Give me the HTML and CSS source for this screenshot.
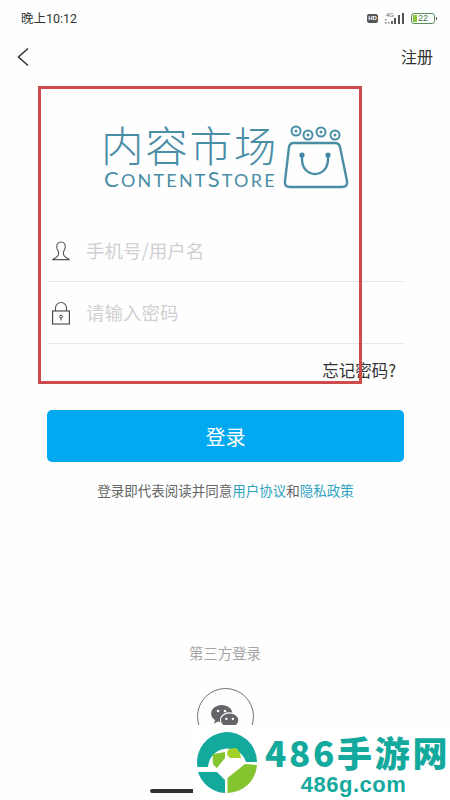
FILE: index.html
```html
<!DOCTYPE html>
<html lang="zh-CN">
<head>
  <meta charset="UTF-8">
  <meta name="viewport" content="width=device-width, initial-scale=1.0">
  <title>内容市场</title>
  <link rel="stylesheet" href="styles.css">
</head>
<body>
  <div class="page">
    <div class="status-bar">
      <span class="time">晚上10:12</span>
      <div class="status-icons">
        <span class="hd">HD</span>
        <svg class="signal" width="21" height="14" viewBox="0 0 21 14">
          <text x="2" y="6" class="net">4G</text>
          <rect x="1" y="8" width="1.500" height="1.500" fill="#888"/>
          <rect x="1" y="11" width="1.500" height="1.500" fill="#888"/>
          <rect x="4" y="11" width="1.500" height="1.500" fill="#888"/>
          <rect x="7" y="10" width="2" height="3" fill="#666"/>
          <rect x="10" y="7" width="2" height="6" fill="#555"/>
          <rect x="14" y="4" width="2" height="9" fill="#555"/>
          <rect x="18" y="2" width="2" height="11" fill="#555"/>
        </svg>
        <span class="battery"><span class="battery-fill"></span><span class="battery-num">22</span></span>
      </div>
    </div>

    <div class="nav">
      <svg width="12" height="20" viewBox="0 0 12 20"><path d="M11 1.500 1.500 10 11 18.500" fill="none" stroke="#333" stroke-width="1.500"/></svg>
      <span class="nav-link">注册</span>
    </div>

    <div class="logo">
      <div class="logo-words">
        <div class="logo-cn">内容市场</div>
        <div class="logo-en"><span class="cap">C</span>ONTENT<span class="cap">S</span>TORE</div>
      </div>
      <svg class="bag" width="66" height="64" viewBox="0 0 66 64">
        <g fill="none" stroke="#4a8ea6" stroke-width="2">
          <circle cx="13" cy="6" r="4.500"/>
          <circle cx="25" cy="10" r="4.500"/>
          <circle cx="38" cy="7" r="4.500"/>
          <circle cx="52" cy="10" r="4.500"/>
          <path d="M10 18H52Q56 18 57 22L64 56Q65 62 59 62H7Q1 62 2 56L6 22Q7 18 10 18Z" stroke-width="2.400"/>
          <path d="M19 30V34C19 54 45 54 45 34V30" stroke-width="2.400"/>
        </g>
        <circle cx="19" cy="30" r="2.600" fill="#3f87a3"/>
        <circle cx="45" cy="30" r="2.600" fill="#3f87a3"/>
        <g fill="#4a8ea6">
          <circle cx="13" cy="6" r="1.500"/>
          <circle cx="25" cy="10" r="1.500"/>
          <circle cx="38" cy="7" r="1.500"/>
          <circle cx="52" cy="10" r="1.500"/>
        </g>
      </svg>
    </div>

    <div class="form">
      <div class="field">
        <svg class="field-icon" width="18" height="20" viewBox="0 0 18 20">
          <path d="M9 1C5.800 1 4.600 3.400 4.800 6.200 5 8.600 6.400 10 6.600 11.400 6.800 13.600 6.600 15 4.400 16.200 3 17 1.600 17.600.8 18.600H17.200C16.400 17.600 15 17 13.600 16.200 11.400 15 11.200 13.600 11.400 11.400 11.600 10 13 8.600 13.200 6.200 13.400 3.400 12.200 1 9 1Z" fill="none" stroke="#555" stroke-width="1.100"/>
        </svg>
        <span class="placeholder">手机号/用户名</span>
      </div>
      <div class="field">
        <svg class="field-icon" width="18" height="24" viewBox="0 0 18 24">
          <path d="M3.500 10V7A5.500 5.500 0 0 1 14.500 7V10" fill="none" stroke="#555" stroke-width="1.100"/>
          <rect x=".6" y="10" width="16.800" height="13" fill="none" stroke="#444" stroke-width="1.100"/>
          <circle cx="9" cy="15.500" r="1.400" fill="none" stroke="#444"/>
          <path d="M9 17V19.500" stroke="#444"/>
        </svg>
        <span class="placeholder">请输入密码</span>
      </div>
      <div class="forgot">忘记密码?</div>
      <button class="login-btn">登录</button>
      <p class="terms">登录即代表阅读并同意<span class="terms-link">用户协议</span>和<span class="terms-link">隐私政策</span></p>
    </div>

    <div class="third">
      <div class="third-title">第三方登录</div>
      <div class="wechat">
        <svg width="28" height="24" viewBox="0 0 30 26">
          <path d="M11.500 0C5.200 0 0 4.100 0 9.300 0 12.200 1.600 14.700 4.200 16.400L3 20 7.200 17.800C8.500 18.300 10 18.500 11.500 18.500 17.800 18.500 23 14.400 23 9.300 23 4.100 17.800 0 11.500 0Z" fill="#666468"/>
          <path d="M20 8.500C14.500 8.500 10 12 10 16.500 10 21 14.500 24.500 20 24.500 21.200 24.500 22.300 24.300 23.400 24L27 26 26.100 22.800C28.500 21.200 30 19 30 16.500 30 12 25.500 8.500 20 8.500Z" fill="#666468" stroke="#fff" stroke-width="1.200"/>
          <g fill="#fff">
            <circle cx="7.500" cy="6.500" r="1.400"/>
            <circle cx="15" cy="6.500" r="1.400"/>
            <circle cx="16.500" cy="15" r="1.300"/>
            <circle cx="23.500" cy="15" r="1.300"/>
          </g>
        </svg>
      </div>
    </div>

    <div class="home-bar"></div>

    <div class="red-box"></div>

    <div class="watermark">
      <svg class="wm-logo" width="62" height="64" viewBox="0 0 62 64">
        <path d="M1.400 36A30 30 0 1 1 61 31H50A19.500 19.500 0 0 0 12 36Z" fill="#14a99d"/>
        <path d="M61 34A30 30 0 0 1 31.500 62V47L49 33Z" fill="#84c52f"/>
        <path d="M2 41H21L29 49V62A30 30 0 0 1 2 41Z" fill="#14a99d"/>
        <path d="M17 23 29 21V27L21 37 17.500 34C16.500 31 16.500 27 17 23Z" fill="#84c52f"/>
        <path d="M31.500 20 33 18 40 17C43 19 44.500 23 45 27L34 27 31 24Z" fill="#a2d128"/>
      </svg>
      <div class="wm-text">
        <div class="wm-title">486手游网</div>
        <div class="wm-url">486g.com</div>
      </div>
    </div>
  </div>
</body>
</html>
```

FILE: styles.css
```css
* { box-sizing: border-box; margin: 0; padding: 0; }
body { width: 450px; height: 800px; overflow: hidden; background: #fefefe; font-family: "Noto Sans CJK SC", "Liberation Sans", sans-serif; }
.page { position: relative; width: 450px; height: 800px; overflow: hidden; padding-top: 8px; }

.status-bar { display: flex; justify-content: space-between; align-items: center; height: 20px; padding: 0 15px 0 21px; }
.time { margin-bottom: 2px; font-size: 12.500px; color: #333; font-family: "Roboto", "Noto Sans CJK SC", sans-serif; }
.status-icons { display: flex; align-items: center; gap: 6px; }
.hd { width: 11px; height: 9px; background: #555; border-radius: 2px; color: #fff; font-size: 6px; line-height: 9px; text-align: center; font-family: "Liberation Sans", sans-serif; font-weight: bold; }
.net { font-size: 6px; fill: #666; font-family: "Liberation Sans", sans-serif; }
.signal { display: block; }
.battery { position: relative; display: block; width: 24px; height: 11px; border: 1px solid #5a8f5a; border-radius: 3px; }
.battery::after { content: ""; position: absolute; right: -3px; top: 3px; width: 1.500px; height: 3px; background: #555; }
.battery-fill { display: block; width: 4px; height: 7px; margin: 1px; background: #8cc63f; }
.battery-num { position: absolute; left: 6px; top: -1px; font-size: 9px; line-height: 11px; color: #4a7c4a; font-family: "Liberation Sans", sans-serif; }

.nav { display: flex; justify-content: space-between; align-items: center; height: 38px; margin-top: 10px; padding: 0 17px; }
.nav svg { display: block; }
.nav-link { margin-bottom: 2px; font-size: 16px; color: #333; }

.logo { display: flex; align-items: flex-start; gap: 5px; height: 64px; margin: 49px 0 0 103px; }
.logo-words { width: 175px; }
.logo-cn { margin: -2px 0 0 -2px; font-size: 42.500px; font-weight: 300; line-height: 42px; letter-spacing: 1.800px; color: #4a8ea6; white-space: nowrap; }
.logo-en { margin-top: 4px; padding-left: 1px; font-family: "Lato", sans-serif; font-size: 18px; line-height: 20px; color: #4a8ea6; white-space: nowrap; letter-spacing: 2.200px; }
.cap { font-size: 22px; }
.bag { display: block; flex: none; }

.form { margin: 31px 46px 0 47px; }
.field { display: flex; align-items: center; height: 62px; padding-left: 5px; border-bottom: 1px solid #e8e6ec; }
.field-icon { display: block; flex: none; width: 18px; margin-right: 16px; }
.placeholder { margin-bottom: 2px; font-size: 18.500px; color: #d0d0d3; white-space: nowrap; }
.forgot { margin-top: 14px; padding-right: 8px; text-align: right; font-size: 16.500px; line-height: 24px; color: #333; }
.login-btn { display: block; width: 100%; height: 52px; margin-top: 28px; border: 0; border-radius: 5px; background: #03a9f0; color: #fff; font-family: inherit; font-size: 20px; }
.terms { margin-top: 18px; text-align: center; font-size: 13.500px; line-height: 20px; color: #666; white-space: nowrap; }
.terms-link { color: #2fa3bd; }

.third { display: flex; flex-direction: column; align-items: center; margin-top: 143px; }
.third-title { font-size: 14.400px; line-height: 20px; color: #a5a5a5; }
.wechat { display: flex; justify-content: center; padding-top: 16px; width: 57px; height: 57px; margin-top: 25px; border: 1.500px solid #747474; border-radius: 50%; }
.wechat svg { display: block; }

.home-bar { position: absolute; left: 150px; top: 789px; width: 130px; height: 4px; border-radius: 2px; background: #333; }
.red-box { position: absolute; left: 38px; top: 86px; width: 324px; height: 298px; border: 3px solid #cf4a4a; }

.watermark { position: absolute; left: 193px; top: 725px; display: flex; gap: 7px; width: 257px; height: 75px; padding: 6px 0 0 3px; background: #fff; }
.wm-logo { display: block; flex: none; }
.wm-text { display: flex; flex-direction: column; align-items: center; }
.wm-title { margin-top: 1px; font-family: "Noto Sans CJK SC", sans-serif; font-size: 35px; font-weight: 900; line-height: 40px; letter-spacing: 2.700px; color: #14a99d; white-space: nowrap; }
.wm-url { padding-right: 8px; font-family: "Liberation Sans", sans-serif; font-size: 22px; font-weight: bold; line-height: 25px; letter-spacing: .5px; color: #14a99d; }
```
